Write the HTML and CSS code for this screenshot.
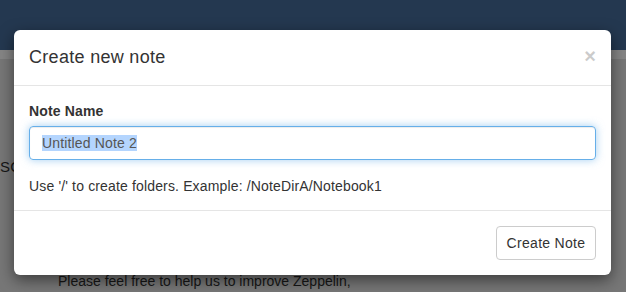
FILE: index.html
```html
<!DOCTYPE html>
<html lang="en">
<head>
  <meta charset="UTF-8">
  <title>Create new note</title>
  <link rel="stylesheet" href="styles.css">
</head>
<body>

  <div class="navbar"></div>
  <div class="subbar"></div>
  <div class="page">
    <p class="side-text">SC</p>
    <p class="footer-text">Please feel free to help us to improve Zeppelin,</p>
  </div>

  <!-- modal -->
  <div class="modal">
    <div class="modal-header">
      <h4 class="modal-title">Create new note</h4>
      <span class="close">&times;</span>
    </div>
    <div class="modal-body">
      <label class="field-label">Note Name</label>
      <div class="input"><span class="selected">Untitled Note 2</span></div>
      <p class="help">Use '/' to create folders. Example: /NoteDirA/Notebook1</p>
    </div>
    <div class="modal-footer">
      <button class="btn">Create Note</button>
    </div>
  </div>

</body>
</html>
```

FILE: styles.css
```css
body { margin:0; font-family:"Liberation Sans", Arial, sans-serif; font-size:14px; color:#333;
       letter-spacing:.15px; background:#777; height:292px; overflow:hidden; position:relative; }
.navbar { height:50px; background:#243850; }
.subbar { height:9px; background:#858585; }
.page { padding:0; color:#161616; }
.side-text { margin:0; position:relative; top:99px; left:0; font-size:15px; }
.footer-text { margin:0; position:relative; top:197px; left:58px; font-size:14px; letter-spacing:0; }

.modal {
  position:absolute; left:14px; top:30px; width:597px;
  background:#fff; border-radius:6px;
  box-shadow:0 5px 15px rgba(0,0,0,.5);
}
.modal-header { padding:15px; border-bottom:1px solid #e5e5e5; position:relative; }
.modal-title { margin:0; font-size:18px; font-weight:normal; line-height:25px; color:#333; letter-spacing:.3px; }
.close { position:absolute; right:15px; top:14px; font-size:20px; font-weight:bold; color:#000; opacity:.2; line-height:25px; }

.modal-body { padding:15px 15px 14px; }
.field-label { display:block; font-weight:bold; line-height:20px; margin-bottom:5px; }
.input {
  height:32px; border:1px solid #66afe9; border-radius:4px; padding:0 12px;
  line-height:32px; color:#555;
  box-shadow:inset 0 1px 1px rgba(0,0,0,.075), 0 0 8px rgba(102,175,233,.6);
}
.selected { background:#b4d5fe; }
.help { margin:16px 0 0; line-height:20px; color:#333; }

.modal-footer { padding:15px; border-top:1px solid #e5e5e5; text-align:right; }
.btn {
  font-family:inherit; font-size:14px; color:#333; background:#fff; letter-spacing:.3px;
  border:1px solid #ccc; border-radius:4px; padding:6px 8px; line-height:20px;
  width:100px;
}
```
